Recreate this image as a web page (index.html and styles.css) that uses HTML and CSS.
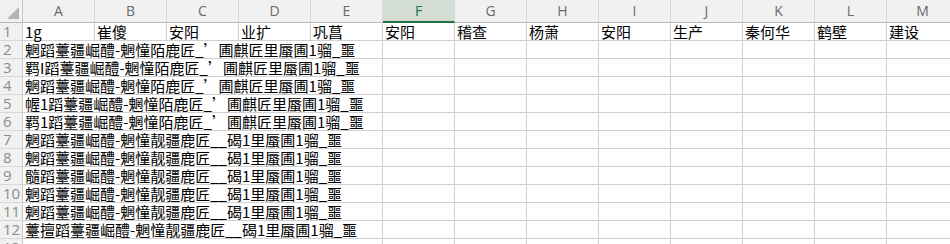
FILE: index.html
```html
<!DOCTYPE html>
<html lang="zh-CN">
  <head>
    <meta charset="UTF-8" />
    <meta name="viewport" content="width=device-width, initial-scale=1.0" />
    <title>Sheet1</title>
    <link rel="stylesheet" href="styles.css">
  </head>
  <body>
    <div class="sheet">
      <div class="corner"><span class="tri"></span></div>
      <div class="ch">A</div>
      <div class="ch">B</div>
      <div class="ch">C</div>
      <div class="ch">D</div>
      <div class="ch">E</div>
      <div class="ch sel">F</div>
      <div class="ch">G</div>
      <div class="ch">H</div>
      <div class="ch">I</div>
      <div class="ch">J</div>
      <div class="ch">K</div>
      <div class="ch">L</div>
      <div class="ch">M</div>

      <div class="rh">1</div>
      <div class="c">1g</div>
      <div class="c">崔傻</div>
      <div class="c">安阳</div>
      <div class="c">业扩</div>
      <div class="c">巩菖</div>
      <div class="c">安阳</div>
      <div class="c">稽查</div>
      <div class="c">杨萧</div>
      <div class="c">安阳</div>
      <div class="c">生产</div>
      <div class="c">秦何华</div>
      <div class="c">鹤壁</div>
      <div class="c">建设</div>
    </div>

    <script>
      const rows = [
        "魍蹈薹疆崛醴-魍憧陌鹿匠_’圃麒匠里蜃圃1骝_噩",
        "羁I蹈薹疆崛醴-魍憧陌鹿匠_’圃麒匠里蜃圃1骝_噩",
        "魍蹈薹疆崛醴-魍憧陌鹿匠_’圃麒匠里蜃圃1骝_噩",
        "幄1蹈薹疆崛醴-魍憧陌鹿匠_’圃麒匠里蜃圃1骝_噩",
        "羁1蹈薹疆崛醴-魍憧陌鹿匠_’圃麒匠里蜃圃1骝_噩",
        "魍蹈薹疆崛醴-魍憧靓疆鹿匠__碣1里蜃圃1骝_噩",
        "魍蹈薹疆崛醴-魍憧靓疆鹿匠__碣1里蜃圃1骝_噩",
        "髓蹈薹疆崛醴-魍憧靓疆鹿匠__碣1里蜃圃1骝_噩",
        "魍蹈薹疆崛醴-魍憧靓疆鹿匠__碣1里蜃圃1骝_噩",
        "魍蹈薹疆崛醴-魍憧靓疆鹿匠__碣1里蜃圃1骝_噩",
        "薹擅蹈薹疆崛醴-魍憧靓疆鹿匠__碣1里蜃圃1骝_噩",
        ""
      ];
      const sheet = document.querySelector(".sheet");
      let html = "";
      rows.forEach((text, i) => {
        html += `<div class="rh">${i + 2}</div>`;
        html += `<div class="c wide">${text}</div>`;
        // columns F..M stay empty
        for (let j = 0; j < 8; j++) html += `<div class="c"></div>`;
      });
      sheet.insertAdjacentHTML("beforeend", html);
    </script>
  </body>
</html>
```

FILE: styles.css
```css
body {
  margin: 0;
  background-color: #fff;
  overflow: hidden;
  font-family: "Noto Sans CJK SC", sans-serif;
}
.sheet {
  display: grid;
  grid-template-columns: 23px repeat(13, 72px);
  grid-template-rows: 23px;
  grid-auto-rows: 18px;
  width: 950px;
  height: 244px;
  overflow: hidden;
}
.corner,
.ch,
.rh {
  background-color: #f0f1f0;
  box-sizing: border-box;
}
.corner {
  position: relative;
  border-right: 1px solid #c6c6c6;
  border-bottom: 1px solid #b8b8b8;
}
.tri {
  position: absolute;
  right: 3px;
  bottom: 3px;
  width: 0;
  height: 0;
  border-left: 12px solid transparent;
  border-bottom: 12px solid #b4b4b4;
}
.ch {
  border-right: 1px solid #d8d8d8;
  border-bottom: 1px solid #b8b8b8;
  color: #6a6a6a;
  font-family: "Open Sans", "Noto Sans", sans-serif;
  font-size: 14px;
  line-height: 22px;
  text-align: center;
}
.ch.sel {
  background-color: #d3ddd4;
  color: #217346;
  border-bottom: 2px solid #217346;
}
.rh {
  border-right: 1px solid #c6c6c6;
  border-bottom: 1px solid #d8d8d8;
  color: #8c8c8c;
  font-family: "Open Sans", "Noto Sans", sans-serif;
  font-size: 15px;
  line-height: 17px;
  padding-left: 3px;
}
.c {
  box-sizing: border-box;
  border-right: 1px solid #d0d0d0;
  border-bottom: 1px solid #d0d0d0;
  padding-left: 2px;
  color: #000;
  font-size: 15px;
  line-height: 17px;
  white-space: nowrap;
}
.c.wide {
  grid-column: span 5;
}
```
